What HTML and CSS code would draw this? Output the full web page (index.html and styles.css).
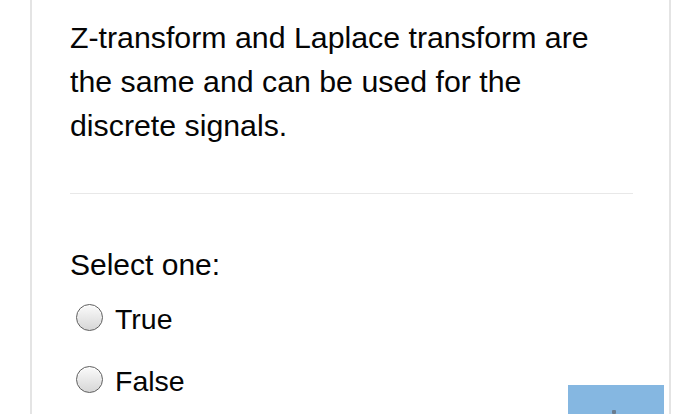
FILE: index.html
```html
<!DOCTYPE html>
<html>
<head>
<meta charset="utf-8">
<link rel="stylesheet" href="styles.css">
</head>
<body>
<div class="card">
  <div class="qtext">Z-transform and Laplace transform are the same and can be used for the discrete signals.</div>
  <hr class="divider">
  <div class="prompt">Select one:</div>
  <div class="answers">
    <label class="option"><span class="radio"></span><span class="label">True</span></label>
    <label class="option"><span class="radio"></span><span class="label">False</span></label>
  </div>
  <div class="next-btn"><span class="mark"></span></div>
</div>
</body>
</html>
```
FILE: styles.css
```css
html, body {
  margin: 0;
  padding: 0;
  background: #ffffff;
  height: 414px;
  overflow: hidden;
}
.card {
  position: relative;
  margin-left: 30px;
  width: 563px;
  height: 414px;
  box-sizing: content-box;
  border-left: 2px solid #e4e4e4;
  border-right: 2px solid #e4e4e4;
  padding: 0 36px 0 38px;
  font-family: "Liberation Sans", Arial, Helvetica, sans-serif;
  color: #050505;
}
.qtext {
  font-size: 30.3px;
  line-height: 44px;
  padding-top: 16px;
  width: 540px;
}
.divider {
  border: 0;
  border-top: 1px solid #e8e8e8;
  margin: 45px 0 0 0;
  height: 0;
}
.prompt {
  font-size: 30px;
  line-height: 44px;
  margin-top: 49px;
}
.answers {
  display: flex;
  flex-direction: column;
  gap: 18px;
  margin-top: 10px;
}
.option {
  display: flex;
  align-items: center;
  gap: 12px;
  padding-left: 6px;
  font-size: 28.5px;
  line-height: 44px;
}
.radio {
  width: 25px;
  height: 25px;
  border-radius: 50%;
  border: 1.5px solid #5e5e5e;
  background: linear-gradient(#fbfbfb, #d6d6d6);
  box-shadow: inset 0 1px 1px rgba(255,255,255,0.9);
  flex: none;
  margin-top: -4px;
}
.next-btn {
  position: absolute;
  left: 536px;
  top: 385px;
  width: 96px;
  height: 40px;
  background: #85b7e1;
}
.mark {
  position: absolute;
  left: 44px;
  top: 25px;
  width: 4px;
  height: 4px;
  background: #6a7d90;
  border-radius: 1px;
}
```
